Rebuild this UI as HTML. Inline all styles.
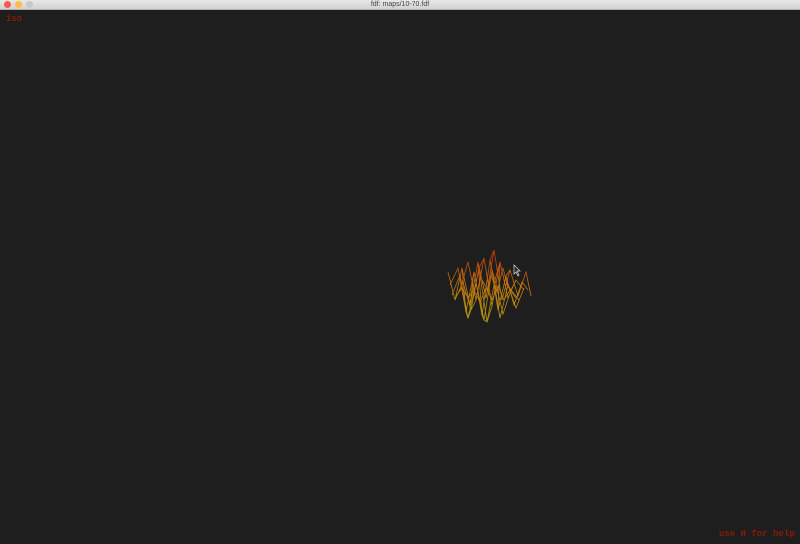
<!DOCTYPE html>
<html><head><style>
html,body{margin:0;padding:0;width:800px;height:544px;overflow:hidden;background:#1e1e1e;}
#tb{position:absolute;left:0;top:0;width:800px;height:10px;background:linear-gradient(#e8e8e8,#d2d2d2);border-bottom:1px solid #b0b0b0;box-sizing:border-box;}
.d{position:absolute;top:1px;width:7px;height:7px;border-radius:50%;}
#t{position:absolute;top:0;left:0;width:800px;text-align:center;font:7px/10px "Liberation Sans",sans-serif;color:#444;}
.m{position:absolute;font:bold 9px/10px "Liberation Mono",monospace;color:#8a1a08;}
</style></head><body>
<div id="tb"><div class="d" style="left:4px;background:#fc5753"></div><div class="d" style="left:15px;background:#fdbc40"></div><div class="d" style="left:26px;background:#c8c8c8"></div><div id="t">fdf: maps/10-70.fdf</div></div>
<div class="m" style="left:6px;top:14px">iso</div>
<div class="m" style="left:719px;top:529px">use H for help</div>
<svg width="800" height="544" style="position:absolute;left:0;top:0" fill="none" stroke-width="0.8">
<defs><linearGradient id="g" x1="0" y1="248" x2="0" y2="325" gradientUnits="userSpaceOnUse"><stop offset="0" stop-color="#c0300a"/><stop offset="0.45" stop-color="#c07010"/><stop offset="1" stop-color="#b0a010"/></linearGradient></defs>
<g stroke="url(#g)">
<polyline points="448,272 455,300 462,268 470,305 478,262 486,298 494,250 502,300 510,270 518,296 526,272 531,296"/>
<polyline points="450,285 458,268 466,312 474,272 482,315 490,260 498,310 506,276 514,305 522,282 528,290"/>
<polyline points="452,295 460,275 468,318 476,282 484,320 492,270 500,318 508,285 516,308 524,288"/>
<polyline points="455,300 463,282 471,310 479,268 487,322 495,280 503,314 511,290 519,300"/>
<polyline points="460,290 468,262 476,300 484,258 492,306 500,262 508,298 516,280 524,290"/>
<polyline points="462,268 466,312 468,318 471,310 476,300"/>
<polyline points="478,262 482,315 484,320 487,322 492,306"/>
<polyline points="494,250 490,260 492,270 495,280 500,262 498,310"/>
<polyline points="510,270 506,276 508,285 511,290 516,280"/>
<polyline points="470,305 474,272 476,282 479,268 484,258"/>
<polyline points="486,298 482,280 488,290 491,275 497,292 503,268 508,288"/>
<polyline points="456,296 462,288 468,298 474,290 480,302 486,288 492,300 498,286 504,300 510,290 516,298"/>
</g>
<path d="M514,265 v9 l2,-2 l2,4 l1,-1 l-2,-4 h3 z" fill="#222" stroke="#ddd" stroke-width="0.7"/>
</svg>
</body></html>
